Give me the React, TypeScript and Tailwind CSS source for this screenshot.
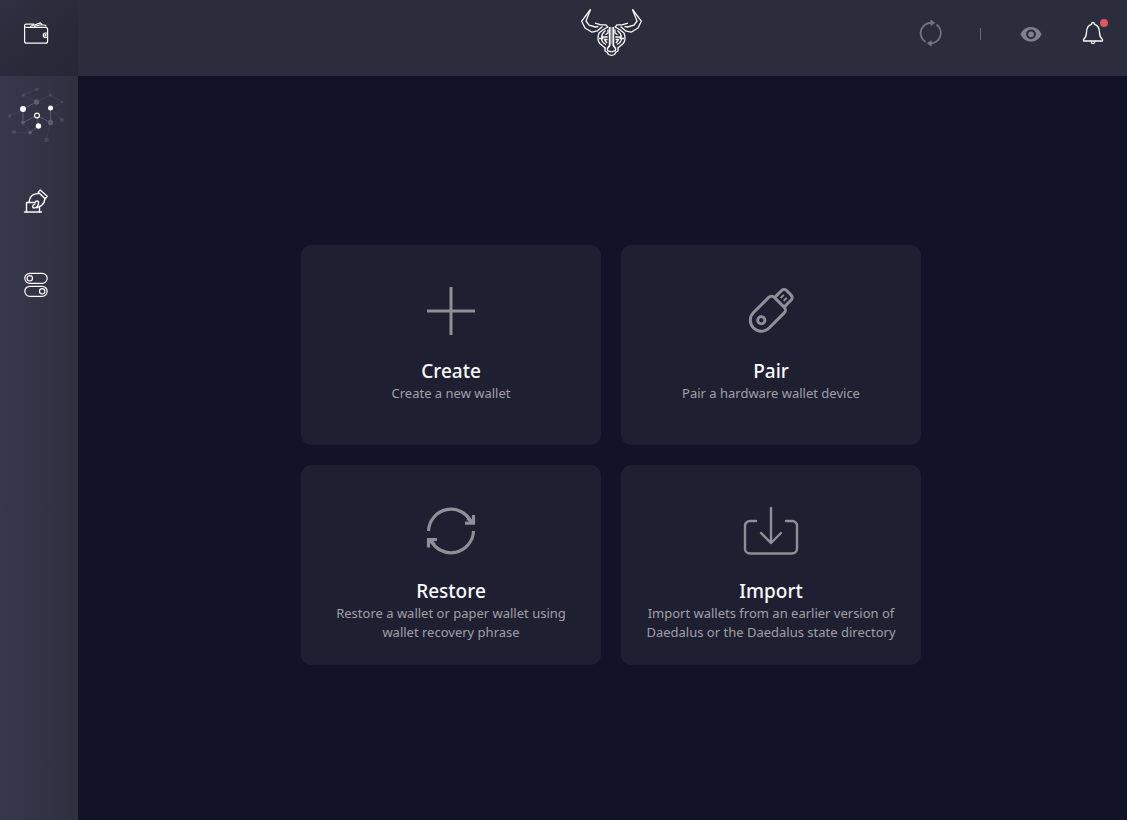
import type { ReactNode } from 'react';

interface IconProps {
  className?: string;
}

const BullLogo = () => (
  <svg className="w-16 h-[50px]" viewBox="9 9 64 50" fill="none" stroke="#fafafa" strokeWidth="1.3" strokeLinejoin="round">
    <defs>
      <g id="bull-half">
        <path d="M20.5 9.5 11.7 21.2 15 28l7 4.2 5.5-1.4 5-4.3" />
        <path d="M20.5 9.5 16 21l3 4.2 6.5 1.8 3-.5" />
        <path d="M25 23.2 31 24.8h5l1.8 2.2-4.300 2.500-4.500 3.500c-1.500 4-1.200 8 .8 10.500l5.700 4.800" />
        <path d="M35.500 30.500c-2.500 2-3.800 4-3.800 6.500h6M29 38.500h4.500M31.500 39c.3 2.500 1.500 4 4.500 5.500" />
        <path d="M38 29.500v3.500l-2.500 1.800M37.500 39.500h-3l2.500 3.500" />
        <path d="M39.7 27v18.5l-2 2.5" strokeWidth="1.8" />
        <path d="M35 47.5v3.500l2.500 1.500.8 2 3.400 1" />
        <path d="M37.500 48v2.700l4 1.200" />
      </g>
    </defs>
    <use href="#bull-half" />
    <use href="#bull-half" transform="translate(83 0) scale(-1 1)" />
    <path d="M41.5 27v17" stroke="#8d8e97" strokeWidth="0.8" />
  </svg>
);

const WalletIcon = () => (
  <svg className="w-7 h-7" viewBox="22 20 28 28" fill="none" stroke="#fafafa" strokeWidth="1.2" strokeLinejoin="round">
    <path d="M24.6 26v15.2a2 2 0 0 0 2 2h19a2 2 0 0 0 2-2V29.3a2 2 0 0 0-2-2H26.2a1.6 1.6 0 0 1 0-3.2h8" />
    <path d="m30 26.5 10.5-3.6 1.5 1.7M34 26.5l6-1.5h4.5a1.6 1.6 0 0 1 1.6 1.6" />
    <path d="M47.5 33h-2a2.2 2.2 0 0 0 0 4.4h2" />
    <circle cx="45.6" cy="35.2" r="0.5" />
  </svg>
);

const NetworkIcon = () => (
  <svg className="w-[60px] h-[60px]" viewBox="6 12 60 60" fill="#8a8b99">
    <g fill="none" stroke="#8a8b99" strokeWidth="1">
      <path d="M23 46.5V33l13.5-7M23 46.5l14-7 13.5 7V32M37 39.5 38.5 50 30 56.5" strokeOpacity="0.45" />
      <path
        d="m37 13-14 6 13.5 7L50 19l12.5 7-12 6M23 33 9.5 40M50.5 32 62 44M50.5 46.5l-4 17.5M14 56l16 .5M23 46.5 30 56.5"
        strokeOpacity="0.12"
      />
    </g>
    <g fillOpacity="0.22">
      <circle cx="37" cy="13" r="2.2" />
      <circle cx="23" cy="19" r="1.8" />
      <circle cx="50.5" cy="19" r="1.8" />
      <circle cx="62.5" cy="26" r="1.2" />
      <circle cx="9.5" cy="40" r="1.9" />
      <circle cx="62" cy="44" r="2.2" />
      <circle cx="14" cy="56" r="2.2" />
      <circle cx="46.5" cy="64" r="2.3" />
    </g>
    <g fill="#5c5d6d">
      <circle cx="36.5" cy="26" r="2.8" />
      <circle cx="50.5" cy="46.5" r="2.7" />
      <circle cx="23" cy="46.5" r="1.9" />
      <circle cx="30" cy="56.5" r="1.9" />
    </g>
    <g fill="#fafafa">
      <circle cx="23" cy="33" r="3" />
      <circle cx="50.5" cy="32" r="2.5" />
      <circle cx="38.5" cy="50" r="2.7" />
    </g>
    <circle cx="37" cy="39.5" r="2.4" fill="#2e2f40" stroke="#fafafa" strokeWidth="1.2" />
  </svg>
);

const VotingIcon = () => (
  <svg className="w-7 h-7" viewBox="22 188 28 28" fill="none" stroke="#fafafa" strokeWidth="1.4" strokeLinejoin="round" strokeLinecap="round">
    <path d="M24.5 212h17" />
    <path d="M35 202.500h-8.500V212M39.500 207.500v4.500" />
    <path d="M29 202.300c.5-3.500 1.500-6.300 4-7.500 1.500-.8 3.500-1 5.500-1.300M44.800 198.800c-.1 3-1.300 5.200-3.300 6.700l-5 2.300" />
    <path d="M35 202.500c.8-2 3.800-2 3.600.2-.2 1.800-1.300 4.600-3.800 5.200-2 .5-3-1.500-1.500-2.900l1.700-1" />
    <path d="m38.200 192.200 2-2.300 7 6.300-2 2.600z" />
  </svg>
);

const SettingsIcon = () => (
  <svg className="w-7 h-7" viewBox="22 272 28 28" fill="none" stroke="#fafafa" strokeWidth="1.2">
    <rect x="24.8" y="273.3" width="22.4" height="10" rx="5" />
    <rect x="24.8" y="286.3" width="22.4" height="10" rx="5" />
    <circle cx="29.8" cy="278.3" r="2.7" />
    <circle cx="42.2" cy="291.3" r="2.7" />
  </svg>
);

const SyncIcon = () => (
  <svg className="w-7 h-7" viewBox="916 20 28 28" fill="none" stroke="#737480" strokeWidth="1.8">
    <path d="M925.5 42A10.4 10.4 0 0 1 932 22.8" />
    <path d="M936.5 24.6A10.4 10.4 0 0 1 930 43.4" />
    <path d="m930.8 20.300 3.800 2.600-3.400 2.600zM931.200 40.800l-3.800 2.400 3.800 2.700z" fill="#737480" strokeWidth="1" />
  </svg>
);

const EyeIcon = () => (
  <svg className="w-7 h-7" viewBox="1017 20 28 28">
    <path
      d="M1031 27c-4.8 0-8.8 2.9-10.4 7.3 1.6 4.4 5.6 7.3 10.4 7.3s8.800-2.900 10.400-7.300c-1.600-4.400-5.600-7.300-10.400-7.300z"
      fill="#80818c"
    />
    <circle cx="1031" cy="34.3" r="4.9" fill="#2c2d3c" />
    <circle cx="1031" cy="34.3" r="2.9" fill="#80818c" />
  </svg>
);

const BellIcon = () => (
  <svg className="w-6 h-7" viewBox="1081 20 24 28" fill="none" stroke="#fafafa" strokeWidth="1.3" strokeLinejoin="round">
    <path d="M1083.5 41v-1.4c2.6-2 2.9-3.5 3-7 .1-4.3 1.8-7.4 5-8.2v-.4a1.5 1.5 0 0 1 3 0v.4c3.2.8 4.9 3.9 5 8.2.1 3.5.4 5 3 7V41z" />
    <path d="M1091.2 41v.8a1.8 1.8 0 0 0 3.6 0V41" />
  </svg>
);

const CreateIcon = ({ className }: IconProps) => (
  <svg className={className} viewBox="0 0 56 56" fill="none" stroke="currentColor" strokeWidth="3">
    <path d="M28 4v48M4 28h48" />
  </svg>
);

const PairIcon = ({ className }: IconProps) => (
  <svg className={className} viewBox="0 0 56 56" fill="none" stroke="currentColor" strokeWidth="3" strokeLinejoin="round">
    <g transform="rotate(45 28 28)">
      <path d="M16.700 20a4 4 0 0 1 4-4h14a4 4 0 0 1 4 4V41.400a11 11 0 0 1-22 0z" />
      <path d="M21 16V6A3.500 3.500 0 0 1 24.500 2.500h6.500A3.500 3.500 0 0 1 34.500 6V16" />
      <path d="M25.700 7.500V12M29.800 7.500V12" strokeWidth="2" />
      <circle cx="27.700" cy="41.400" r="3.600" />
    </g>
  </svg>
);

const RestoreIcon = ({ className }: IconProps) => (
  <svg className={className} viewBox="0 0 56 56" fill="none" stroke="currentColor" strokeWidth="3.2">
    <path d="M5.5 28A22.5 22.5 0 0 1 48.5 19.5" />
    <path d="M50.5 28A22.5 22.5 0 0 1 7.5 36.5" />
    <path d="M50.5 12v8.2H42M5.5 44.5v-8H14" />
    <path d="m44.5 15 5.5 5M11.5 41.500 6 37" />
  </svg>
);

const ImportIcon = ({ className }: IconProps) => (
  <svg className={className} viewBox="0 0 56 56" fill="none" stroke="currentColor" strokeWidth="2.4" strokeLinecap="round" strokeLinejoin="round">
    <path d="M13 18H7a5 5 0 0 0-5 5v22.500a5 5 0 0 0 5 5h42a5 5 0 0 0 5-5V23a5 5 0 0 0-5-5h-6" />
    <path d="M28 5v35M18 30l10 10 10-10" />
  </svg>
);

interface SidebarItemProps {
  label: string;
  children: ReactNode;
}

const SidebarItem = ({ label, children }: SidebarItemProps) => (
  <button type="button" aria-label={label} className="w-full h-[84px] pr-1.5 flex items-center justify-center">
    {children}
  </button>
);

const Sidebar = () => (
  <nav className="w-[78px] shrink-0 flex flex-col bg-linear-to-r from-[#37384c] to-[#2e2f3f]">
    <button
      type="button"
      aria-label="Wallets"
      className="w-full h-[76px] pr-1.5 pb-2 flex items-center justify-center bg-linear-to-br from-[#2e2f41] to-[#262733]"
    >
      <WalletIcon />
    </button>
    <SidebarItem label="Staking">
      <NetworkIcon />
    </SidebarItem>
    <SidebarItem label="Voting">
      <VotingIcon />
    </SidebarItem>
    <SidebarItem label="Settings">
      <SettingsIcon />
    </SidebarItem>
  </nav>
);

const TopBar = () => (
  <header className="h-[76px] shrink-0 pl-[17px] pb-2 grid grid-cols-[1fr_auto_1fr] items-center bg-[#2c2d3c]">
    <div />
    <BullLogo />
    <div className="pr-[22px] flex items-center justify-end gap-9">
      <button type="button" aria-label="Sync status">
        <SyncIcon />
      </button>
      <span className="w-px h-3 bg-[#676874]" />
      <button type="button" aria-label="Discreet mode">
        <EyeIcon />
      </button>
      <button type="button" aria-label="News" className="relative">
        <BellIcon />
        <span className="absolute -top-px -right-[3px] size-2 rounded-full bg-[#dd5661]" />
      </button>
    </div>
  </header>
);

const actions = [
  { title: 'Create', description: 'Create a new wallet', Icon: CreateIcon },
  { title: 'Pair', description: 'Pair a hardware wallet device', Icon: PairIcon },
  {
    title: 'Restore',
    description: 'Restore a wallet or paper wallet using wallet recovery phrase',
    Icon: RestoreIcon,
  },
  {
    title: 'Import',
    description: 'Import wallets from an earlier version of Daedalus or the Daedalus state directory',
    Icon: ImportIcon,
  },
];

const App = () => {
  return (
    <div className="min-h-screen flex bg-[#121326] font-['Noto_Sans',sans-serif]">
      <Sidebar />
      <div className="flex-1 flex flex-col">
        <TopBar />
        <main className="flex-1 pl-[17px] pt-3.5 flex items-center justify-center">
          <div className="grid grid-cols-[300px_300px] gap-5">
            {actions.map(({ title, description, Icon }) => (
              <button
                key={title}
                type="button"
                className="h-[200px] px-5 pt-[38px] flex flex-col items-center justify-start rounded-[10px] bg-[#1e1f31] text-center"
              >
                <Icon className="w-14 h-14 mb-5 text-[#8f8f98]" />
                <span className="text-[19px] leading-[25px] font-medium text-[#fafafa]">{title}</span>
                <span className="text-[13px] leading-[19px] text-[#a0a0a8]">{description}</span>
              </button>
            ))}
          </div>
        </main>
      </div>
    </div>
  );
};

export default App;
